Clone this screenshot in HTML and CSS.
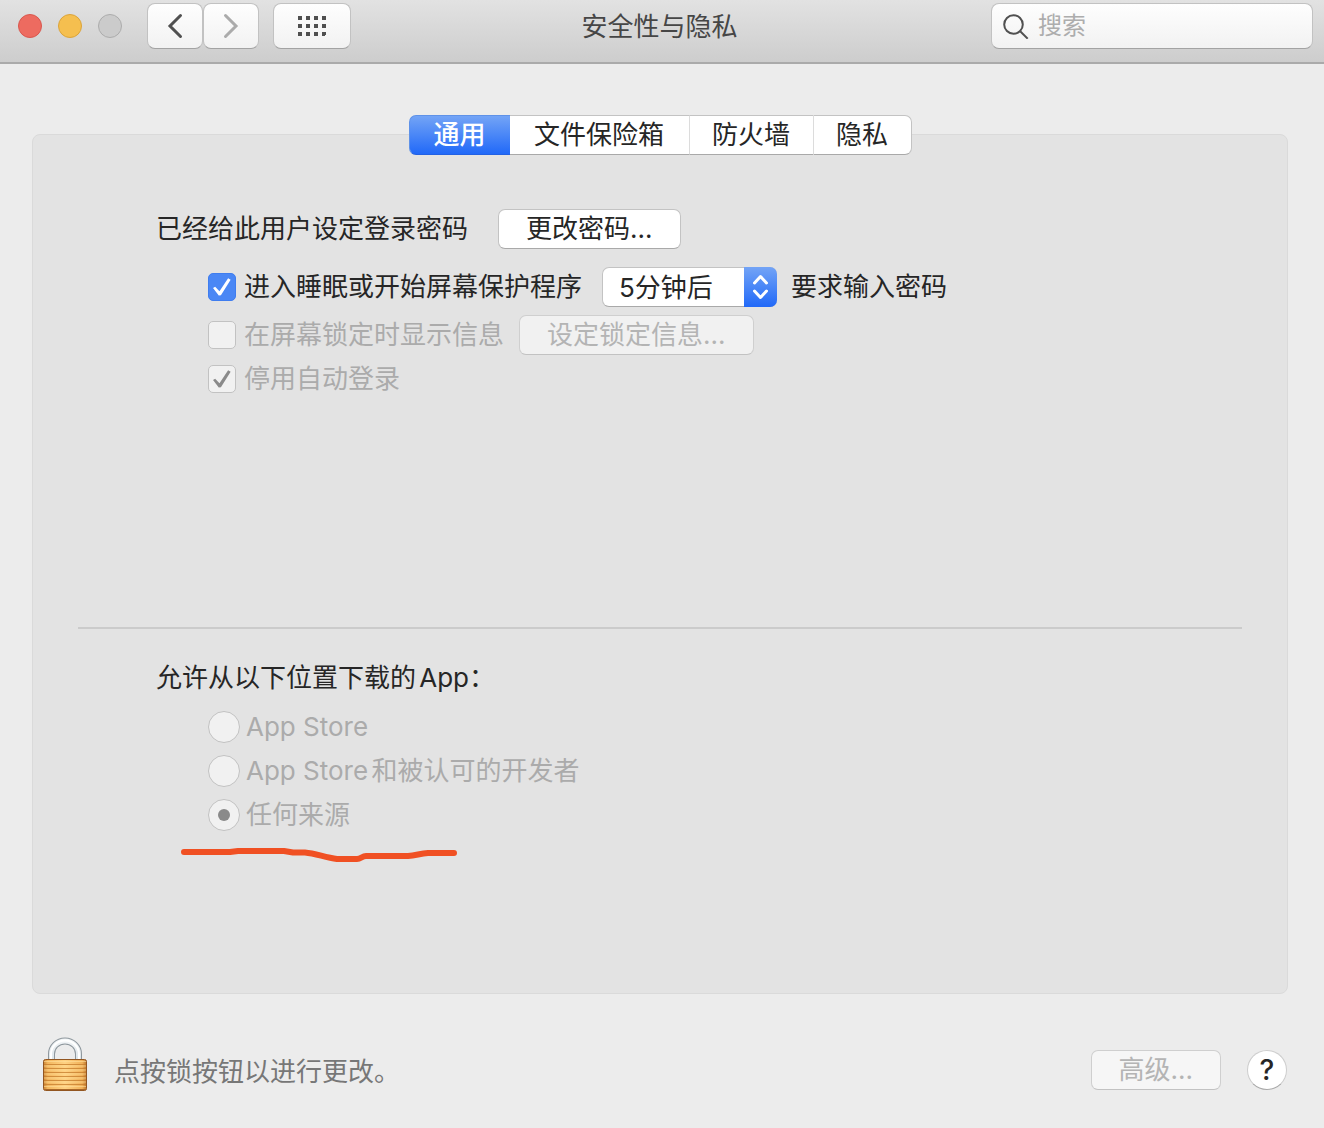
FILE: index.html
```html
<!DOCTYPE html>
<html lang="zh-CN">
<head>
<meta charset="utf-8">
<meta name="viewport" content="width=device-width, initial-scale=1">
<title>安全性与隐私</title>
<link rel="stylesheet" href="styles.css">
</head>
<body>
<header class="toolbar">
  <div class="toolbar-left">
    <div class="lights">
      <button class="light light-close" type="button" aria-label="关闭"></button>
      <button class="light light-minimize" type="button" aria-label="最小化"></button>
      <button class="light light-zoom" type="button" aria-label="缩放" disabled></button>
    </div>
    <div class="history">
      <button class="tool" type="button" aria-label="后退">
        <svg width="16" height="26" viewBox="0 0 16 26"><path class="chevron" d="M13.500 2.500 3 13l10.500 10.500"/></svg>
      </button>
      <button class="tool tool-inactive" type="button" aria-label="前进" disabled>
        <svg width="16" height="26" viewBox="0 0 16 26"><path class="chevron" d="M2.500 2.500 13 13 2.500 23.500"/></svg>
      </button>
    </div>
    <button class="tool tool-wide" type="button" aria-label="显示全部">
      <svg width="28" height="20" viewBox="0 0 28 20"><path class="dots" d="M0 0h4v4H0zM8 0h4v4H8zM16 0h4v4h-4zM24 0h4v4h-4zM0 8h4v4H0zM8 8h4v4H8zM16 8h4v4h-4zM24 8h4v4h-4zM0 16h4v4H0zM8 16h4v4H8zM16 16h4v4h-4zM24 16h4v3h-1v1h-3z"/></svg>
    </button>
  </div>
  <h1 class="title">安全性与隐私</h1>
  <label class="search">
    <svg class="search-icon" width="26" height="26" viewBox="0 0 26 26"><circle cx="10.500" cy="11.500" r="9.300"/><path d="m17.200 18.200 7.500 7.500"/></svg>
    <input class="search-input" type="search" placeholder="搜索" aria-label="搜索">
  </label>
</header>

<main class="panel">
  <div class="tabs" role="tablist">
    <button class="tab tab-active" type="button" role="tab" aria-selected="true">通用</button>
    <button class="tab" type="button" role="tab" aria-selected="false">文件保险箱</button>
    <button class="tab" type="button" role="tab" aria-selected="false">防火墙</button>
    <button class="tab" type="button" role="tab" aria-selected="false">隐私</button>
  </div>

  <section class="login">
    <div class="row row-password">
      <span>已经给此用户设定登录密码</span>
      <button class="push" type="button">更改密码...</button>
    </div>
    <div class="options">
      <div class="row row-sleep">
        <div class="choice">
          <input class="check" type="checkbox" id="require" checked>
          <label for="require">进入睡眠或开始屏幕保护程序</label>
        </div>
        <div class="row row-delay">
          <div class="popup">
            <select class="popup-select" id="delay" aria-label="要求输入密码的时间">
              <option>5分钟后</option>
              <option>立即</option>
              <option>1小时后</option>
            </select>
            <svg class="popup-arrows" width="33" height="40" viewBox="0 0 33 40"><path d="m10.500 16 6-6.500 6 6.500M10.500 24l6 6.500 6-6.500"/></svg>
          </div>
          <label for="delay">要求输入密码</label>
        </div>
      </div>
      <div class="row row-message">
        <div class="choice choice-off">
          <input class="check" type="checkbox" id="message" disabled>
          <label for="message">在屏幕锁定时显示信息</label>
        </div>
        <button class="push" type="button" disabled>设定锁定信息...</button>
      </div>
      <div class="row">
        <div class="choice choice-off">
          <input class="check" type="checkbox" id="autologin" checked disabled>
          <label for="autologin">停用自动登录</label>
        </div>
      </div>
    </div>
  </section>

  <hr class="divider">

  <section class="downloads">
    <h2 class="heading" id="sources">允许从以下位置下载的App：</h2>
    <div class="sources" role="radiogroup" aria-labelledby="sources">
      <div class="source choice-off">
        <input class="radio" type="radio" name="source" id="store" disabled>
        <label for="store">App Store</label>
      </div>
      <div class="source choice-off">
        <input class="radio" type="radio" name="source" id="identified" disabled>
        <label for="identified">App Store和被认可的开发者</label>
      </div>
      <div class="source choice-off">
        <input class="radio" type="radio" name="source" id="anywhere" checked disabled>
        <label for="anywhere">任何来源</label>
      </div>
      <svg class="underline" width="280" height="20" viewBox="0 0 280 20"><path d="M6 8h46l8-1h46l9 1.500h12c11 1 20 5 32 6.500h20c4 0 5-3 9-3h42c8-.500 12-2.500 20-3h26"/></svg>
    </div>
  </section>
</main>

<footer class="footer">
  <button class="lock" type="button" aria-label="锁定">
    <svg width="46" height="56" viewBox="0 0 46 56">
      <defs>
        <linearGradient id="brass" x2="1"><stop offset="0" stop-color="#c98335"/><stop offset=".1" stop-color="#f3b75f"/><stop offset=".5" stop-color="#ffd283"/><stop offset=".9" stop-color="#f0b159"/><stop offset="1" stop-color="#bd772e"/></linearGradient>
        <linearGradient id="steel" x2="0" y2="1"><stop offset="0" stop-color="#f1f4f6"/><stop offset="1" stop-color="#dbe3e8"/></linearGradient>
      </defs>
      <path d="M9.500 25V18a13.500 13 0 0 1 27 0v7" fill="none" stroke="#8e979d" stroke-width="7"/>
      <path d="M9.500 25V18a13.500 13 0 0 1 27 0v7" fill="none" stroke="url(#steel)" stroke-width="5"/>
      <path d="M9 24V18a14 13.500 0 0 1 28 0v6" fill="none" stroke="#fff" stroke-width="2"/>
      <rect x="1.500" y="23.500" width="43" height="31" rx="2" fill="url(#brass)" stroke="#925621"/>
      <path d="M2 28.500h42M2 32.500h42M2 36.500h42M2 40.500h42M2 44.500h42M2 48.500h42" stroke="#c47b2c" stroke-opacity=".75"/>
      <path d="M2 25.500h42M2 30h42M2 34h42M2 38h42M2 42h42M2 46h42M2 50.500h42" stroke="#ffe09b" stroke-opacity=".6"/>
      <path d="M2 53.500h42" stroke="#a86728"/>
    </svg>
  </button>
  <span class="hint">点按锁按钮以进行更改。</span>
  <div class="actions">
    <button class="push push-advanced" type="button" disabled>高级...</button>
    <button class="help" type="button" aria-label="帮助">?</button>
  </div>
</footer>
</body>
</html>
```
FILE: styles.css
```css
* {
  box-sizing: border-box;
}

body {
  display: flex;
  flex-direction: column;
  min-height: 100vh;
  margin: 0;
  background: #ececec;
  color: #262626;
  font: 26px/40px Inter, "Noto Sans CJK SC", sans-serif;
  text-autospace: normal;
}

button,
input,
select {
  margin: 0;
  padding: 0;
  border: 0;
  color: inherit;
  font: inherit;
}

button {
  text-autospace: no-autospace;
}

svg {
  display: block;
  flex: none;
}

/* Toolbar */
.toolbar {
  display: grid;
  grid-template-columns: 1fr auto 1fr;
  align-items: start;
  height: 64px;
  padding: 3px 11px 0 12px;
  border-bottom: 2px solid #aaa;
  background: linear-gradient(#e2e2e2, #cdcdcd);
}

.toolbar-left {
  display: flex;
  align-items: center;
  padding-left: 6px;
}

.lights {
  display: flex;
  gap: 16px;
  margin-right: 25px;
}

.light {
  width: 24px;
  height: 24px;
  border: 1px solid #d9574e;
  border-radius: 50%;
  background: #ed6b60;
}

.light-minimize {
  border-color: #dba43a;
  background: #f5bf4f;
}

.light-zoom {
  border-color: #acacac;
  background: #cbcbcb;
}

.history {
  display: flex;
  margin-right: 14px;
}

.tool,
.search {
  height: 46px;
  border: 1px solid #c2c2c2;
  border-bottom-color: #a3a3a3;
  border-radius: 8px;
  background: linear-gradient(#fefefe, #f2f2f2);
}

.tool {
  display: grid;
  place-items: center;
  width: 56px;
}

.tool-wide {
  width: 78px;
}

.chevron {
  fill: none;
  stroke: #505050;
  stroke-width: 3;
  stroke-linecap: round;
}

.tool-inactive .chevron {
  stroke: #ababab;
}

.dots {
  fill: #4f4f4f;
}

.title {
  margin: 0;
  padding: 4px 6px 0 0;
  color: #464646;
  font-size: 26px;
  font-weight: 400;
}

.search {
  display: flex;
  align-items: center;
  justify-self: end;
  gap: 9px;
  width: 322px;
  padding: 0 11px;
}

.search-icon {
  fill: none;
  stroke: #505050;
  stroke-width: 2;
}

.search-input {
  flex: 1;
  min-width: 0;
  background: none;
  font-size: 24px;
  line-height: 40px;
  outline: none;
}

.search-input::placeholder {
  color: #adadad;
}

/* Panel and tabs */
.panel {
  display: flex;
  flex: 1;
  flex-direction: column;
  margin: 70px 36px 0 32px;
  border: 1px solid #dadada;
  border-radius: 8px;
  background: #e3e3e3;
}

.tabs {
  display: grid;
  grid-template-columns: 101px 179px 124px 99px;
  align-self: center;
  height: 40px;
  margin-top: -20px;
}

.tab {
  border: solid #c3c3c3;
  border-width: 1px 0;
  border-bottom-color: #a9a9a9;
  background: #fff;
  line-height: 38px;
}

.tab + .tab + .tab {
  border-left: 1px solid #dcdcdc;
}

.tab:last-child {
  border-right: 1px solid #c3c3c3;
  border-radius: 0 7px 7px 0;
}

.tab-active {
  border-color: #5f92e8;
  border-left-width: 1px;
  border-bottom-color: #2361e3;
  border-radius: 7px 0 0 7px;
  background: linear-gradient(#73a4f6, #2169f8);
  color: #fff;
  font-weight: 500;
}

/* Login options */
.login {
  flex: 5 1 0;
  padding: 54px 123px 0;
}

.row,
.choice,
.source {
  display: flex;
  align-items: center;
}

.row-password {
  gap: 30px;
}

.row-sleep {
  gap: 20px;
}

.row-delay {
  gap: 14px;
}

.row-message {
  gap: 15px;
  margin: 8px 0 4px;
}

.options {
  padding: 18px 0 0 52px;
}

.choice {
  gap: 8px;
}

.choice-off {
  color: #ababab;
}

.push {
  height: 40px;
  padding: 0 27px;
  border: 1px solid #c3c3c3;
  border-bottom-color: #a9a9a9;
  border-radius: 7px;
  background: #fff;
  line-height: 38px;
}

.push:disabled {
  border-color: #cfcfcf;
  border-bottom-color: #c2c2c2;
  background: #f1f1f1;
  color: #b4b4b4;
}

.push-advanced:disabled {
  background: #f6f6f6;
}

.check,
.radio {
  display: grid;
  flex: none;
  place-items: center;
  appearance: none;
  border: 1px solid #c2c2c2;
  background: #f1f1f1;
}

.check {
  width: 28px;
  height: 28px;
  border-radius: 5px;
}

.check:checked::before {
  content: "";
  width: 18px;
  height: 18px;
  background: #8a8a8a;
  clip-path: polygon(0 55%, 12% 48%, 36% 74%, 84% 2%, 98% 10%, 44% 96%, 32% 97%);
}

.check:checked:enabled {
  border-color: #3f7def;
  background: #4a87f5;
}

.check:checked:enabled::before {
  background: #fff;
}

.popup {
  display: grid;
  width: 175px;
}

.popup-select,
.popup-arrows {
  grid-area: 1 / 1;
}

.popup-select {
  appearance: none;
  height: 40px;
  padding-left: 16px;
  border: 1px solid #c3c3c3;
  border-bottom-color: #a9a9a9;
  border-radius: 7px;
  background: #fff;
}

.popup-arrows {
  justify-self: end;
  border-radius: 0 7px 7px 0;
  background: linear-gradient(#73a4f6, #2169f8);
  fill: none;
  stroke: #fff;
  stroke-width: 3;
  stroke-linecap: round;
  stroke-linejoin: round;
  pointer-events: none;
}

.divider {
  width: auto;
  height: 2px;
  margin: 0 45px;
  border: 0;
  background: #cbcbcb;
}

/* Download sources */
.downloads {
  flex: 4 1 0;
  padding: 29px 123px 0;
}

.heading {
  margin: 0;
  font-size: 26px;
  font-weight: 400;
}

.sources {
  position: relative;
  padding: 7px 0 0 52px;
}

.source {
  gap: 6px;
  height: 44px;
}

.radio {
  width: 32px;
  height: 32px;
  border-radius: 50%;
}

.radio:checked::before {
  content: "";
  width: 12px;
  height: 12px;
  border-radius: 50%;
  background: #8a8a8a;
}

.underline {
  position: absolute;
  top: 146px;
  left: 22px;
  fill: none;
  stroke: #f05023;
  stroke-width: 6;
  stroke-linecap: round;
  stroke-linejoin: round;
}

/* Footer */
.footer {
  display: flex;
  align-items: flex-end;
  padding: 42px 37px 36px 42px;
}

.lock {
  background: none;
}

.hint {
  flex: 1;
  padding-left: 26px;
  color: #777;
}

.actions {
  display: flex;
  gap: 26px;
  padding-bottom: 2px;
}

.help {
  width: 40px;
  height: 40px;
  border: 1px solid #cdcdcd;
  border-bottom-color: #a9a9a9;
  border-radius: 50%;
  background: #fff;
  font-size: 28px;
  font-weight: 500;
  line-height: 38px;
}
```
